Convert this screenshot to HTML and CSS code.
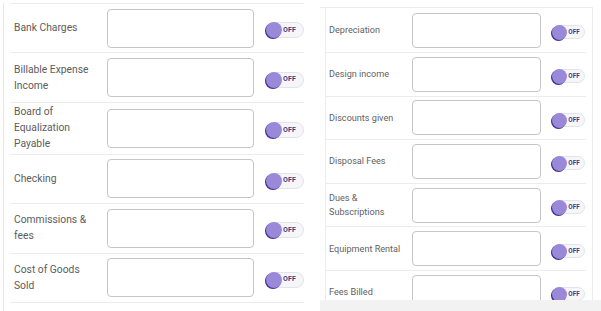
FILE: index.html
```html
<!DOCTYPE html>
<html>
<head>
<meta charset="utf-8">
<link rel="stylesheet" href="styles.css">
</head>
<body>
<div class="page">
  <div class="left">
    <div class="rail">
      <div class="list">
        <div class="row"><div class="label">Bank Charges</div><div class="field"></div><span class="tg"><span class="knob"></span><span class="off">OFF</span></span></div>
        <div class="row"><div class="label">Billable Expense Income</div><div class="field"></div><span class="tg"><span class="knob"></span><span class="off">OFF</span></span></div>
        <div class="row"><div class="label">Board of Equalization Payable</div><div class="field"></div><span class="tg"><span class="knob"></span><span class="off">OFF</span></span></div>
        <div class="row"><div class="label">Checking</div><div class="field"></div><span class="tg"><span class="knob"></span><span class="off">OFF</span></span></div>
        <div class="row"><div class="label">Commissions &amp; fees</div><div class="field"></div><span class="tg"><span class="knob"></span><span class="off">OFF</span></span></div>
        <div class="row"><div class="label">Cost of Goods Sold</div><div class="field"></div><span class="tg"><span class="knob"></span><span class="off">OFF</span></span></div>
      </div>
    </div>
  </div>
  <div class="right">
    <div class="frame">
      <div class="rlist">
        <div class="rrow"><div class="rlabel">Depreciation</div><div class="rfield"></div><span class="tg sm"><span class="knob"></span><span class="off">OFF</span></span></div>
        <div class="rrow"><div class="rlabel">Design income</div><div class="rfield"></div><span class="tg sm"><span class="knob"></span><span class="off">OFF</span></span></div>
        <div class="rrow"><div class="rlabel">Discounts given</div><div class="rfield"></div><span class="tg sm"><span class="knob"></span><span class="off">OFF</span></span></div>
        <div class="rrow"><div class="rlabel">Disposal Fees</div><div class="rfield"></div><span class="tg sm"><span class="knob"></span><span class="off">OFF</span></span></div>
        <div class="rrow"><div class="rlabel">Dues &amp; Subscriptions</div><div class="rfield"></div><span class="tg sm"><span class="knob"></span><span class="off">OFF</span></span></div>
        <div class="rrow"><div class="rlabel">Equipment Rental</div><div class="rfield"></div><span class="tg sm"><span class="knob"></span><span class="off">OFF</span></span></div>
        <div class="rrow"><div class="rlabel">Fees Billed</div><div class="rfield"></div><span class="tg sm"><span class="knob"></span><span class="off">OFF</span></span></div>
      </div>
    </div>
    <div class="foot"></div>
  </div>
</div>
</body>
</html>
```

FILE: styles.css
```css
* { box-sizing: border-box; }
html, body { margin: 0; padding: 0; background: #fff; }
body { font-family: Roboto, "Noto Sans", sans-serif; width: 601px; height: 311px; overflow: hidden; }

.page { display: flex; height: 311px; }

/* left panel */
.left { width: 305px; padding-left: 3px; height: 311px; }
.rail { border-left: 1px solid #e9e9e9; height: 311px; padding-left: 6px; }
.list { margin-top: 3px; border-bottom: 1px solid #ececec; width: 294px; overflow: hidden; }
.row {
  display: flex; align-items: center;
  border-top: 1px solid #ececec;
  min-height: 49.4px;
  padding-left: 4px;
}
.label {
  flex: 0 0 93px; padding-right: 10px;
  font-size: 10.3px; line-height: 16px; color: #5c5c5c;
  padding-top: 1.5px; padding-bottom: 1.5px;
}
.field {
  flex: 0 0 147px; height: 39px;
  border: 1px solid #c6c6c6; border-radius: 4px; background: #fff;
}

/* toggle */
.tg {
  position: relative; flex: 0 0 38px; height: 16px; margin-left: 12px; margin-top: 4px;
  border-radius: 8px; background: #f6f6f9; border: 1px solid #e3e3eb;
  display: flex; align-items: center; justify-content: flex-end; padding-right: 7px;
}
.knob {
  position: absolute; left: -1px; top: -1px;
  width: 16px; height: 16px; border-radius: 50%;
  background: #9a88d8; box-shadow: -1px 1px 0 #3d3291;
}
.off { font-size: 7px; font-weight: 700; color: #3f3b7e; letter-spacing: 0.2px; line-height: 1; }

/* right panel */
.right { margin-left: 15px; flex: 1; display: flex; flex-direction: column; }
.frame {
  margin-top: 7px; border-top: 1px solid #ececec; border-right: 1px solid #ececec;
  width: 273px; height: 293px; padding-left: 5px; overflow: hidden;
}
.rlist { border-left: 1px solid #ececec; width: 261px; height: 292px; overflow: hidden; }
.rrow {
  display: flex; align-items: center;
  border-top: 1px solid #ececec;
  min-height: 43.6px;
  padding-left: 3px;
}
.rrow:first-child { border-top: none; min-height: 44px; }
.rlabel {
  flex: 0 0 83px; padding-right: 5px;
  font-size: 9.1px; line-height: 14px; color: #5f5f5f;
}
.rfield {
  flex: 0 0 129px; height: 35px;
  border: 1px solid #c6c6c6; border-radius: 4px; background: #fff;
}
.tg.sm { flex: 0 0 33px; height: 14px; margin-left: 11px; padding-right: 4px; margin-top: 4px; }
.tg.sm .knob { width: 15px; height: 15px; top: -1px; }
.tg.sm .off { font-size: 6.3px; }
.foot { height: 11px; background: #f2f2f2; }
```
